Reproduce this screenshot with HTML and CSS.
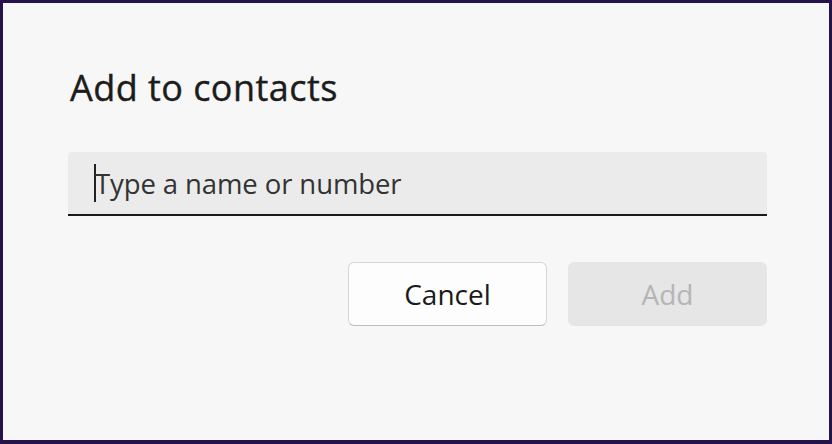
FILE: index.html
```html
<!DOCTYPE html>
<html>
<head>
<meta charset="utf-8">
<link rel="stylesheet" href="styles.css">
</head>
<body>
<div class="frame">
  <div class="dialog">
    <h1 class="title">Add to contacts</h1>
    <div class="field">
      <span class="caret"></span>
      <span class="placeholder">Type a name or number</span>
    </div>
    <div class="actions">
      <button class="btn btn-secondary">Cancel</button>
      <button class="btn btn-disabled">Add</button>
    </div>
  </div>
</div>
</body>
</html>
```

FILE: styles.css
```css
html, body {
  margin: 0;
  padding: 0;
}
body {
  width: 832px;
  height: 444px;
  background: #26124a;
  font-family: "Open Sans", "Noto Sans", sans-serif;
}
.frame {
  box-sizing: border-box;
  width: 832px;
  height: 444px;
  padding: 3px 3px 4px 3px;
}
.dialog {
  box-sizing: border-box;
  height: 100%;
  background: #f8f7f7;
  padding: 58px 62px 0 65px;
}
.title {
  margin: 0 0 0 2px;
  font-size: 36px;
  font-weight: 400;
  -webkit-text-stroke: 0.4px #1c1c1c;
  color: #1c1c1c;
  line-height: 54px;
  letter-spacing: 0.45px;
}
.field {
  margin-top: 37px;
  height: 62px;
  background: #ebebeb;
  border-bottom: 2px solid #1a1a1a;
  border-radius: 4px 4px 0 0;
  display: flex;
  align-items: center;
  padding-left: 26px;
  position: relative;
}
.caret {
  width: 2px;
  height: 38px;
  background: #222;
  margin-right: -1px;
}
.placeholder {
  font-size: 27.5px;
  color: #333;
  letter-spacing: -0.1px;
}
.actions {
  margin-top: 46px;
  display: flex;
  justify-content: flex-end;
  gap: 21px;
}
.btn {
  width: 199px;
  height: 64px;
  border-radius: 6px;
  font-family: "Open Sans", "Noto Sans", sans-serif;
  font-size: 28px;
  padding: 0;
}
.btn-secondary {
  background: #fdfdfd;
  border: 1px solid #d6d6d6;
  border-bottom-color: #bdbdbd;
  color: #1a1a1a;
}
.btn-disabled {
  background: #e6e6e6;
  border: 1px solid #e6e6e6;
  color: #b5b5b5;
}
```
